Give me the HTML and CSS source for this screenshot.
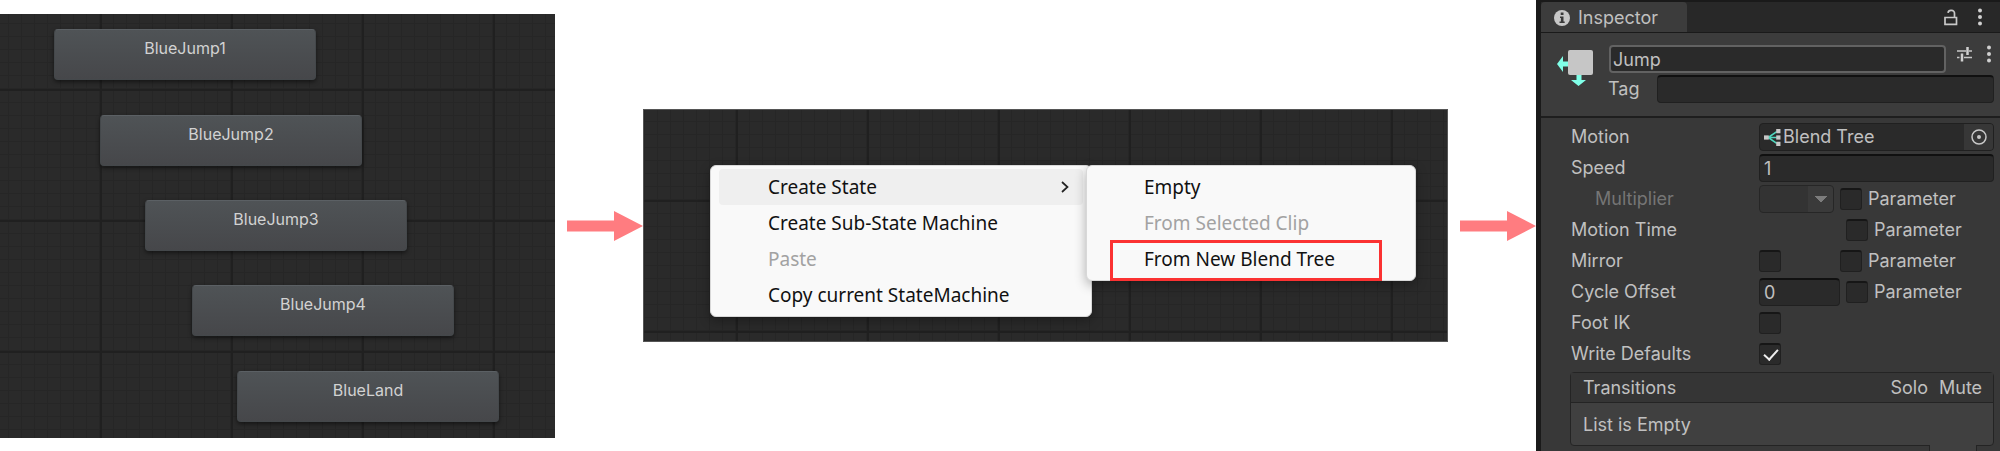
FILE: index.html
```html
<!DOCTYPE html>
<html lang="en">
<head>
<meta charset="utf-8">
<title>Blend tree setup</title>
<link rel="stylesheet" href="styles.css">
</head>
<body>
<main class="steps">
  <section class="canvas states" aria-label="States">
    <div class="node node-1">BlueJump1</div>
    <div class="node node-2">BlueJump2</div>
    <div class="node node-3">BlueJump3</div>
    <div class="node node-4">BlueJump4</div>
    <div class="node node-5">BlueLand</div>
  </section>

  <svg class="arrow" viewBox="0 0 76 30" aria-hidden="true"><path d="M0 9.500H47V0L76 15L47 30V20.500H0Z" fill="#ff7c80"/></svg>

  <section class="canvas context" aria-label="Context menu">
    <div class="menu menu-main">
      <button class="item active">Create State
        <svg class="chevron" viewBox="0 0 8 12" aria-hidden="true"><path d="M1 1L6.500 6L1 11" fill="none" stroke="#222" stroke-width="1.700"/></svg>
      </button>
      <button class="item">Create Sub-State Machine</button>
      <button class="item" disabled>Paste</button>
      <button class="item">Copy current StateMachine</button>
    </div>
    <div class="menu menu-sub">
      <button class="item">Empty</button>
      <button class="item" disabled>From Selected Clip</button>
      <button class="item marked">From New Blend Tree</button>
    </div>
  </section>

  <svg class="arrow" viewBox="0 0 76 30" aria-hidden="true"><path d="M0 9.500H47V0L76 15L47 30V20.500H0Z" fill="#ff7c80"/></svg>

  <section class="inspector" aria-label="Inspector">
    <header class="tabs">
      <button class="tab">
        <svg class="info" viewBox="0 0 16 16" aria-hidden="true"><circle cx="8" cy="8" r="8" fill="#c8c8c8"/><path d="M6.700 2.600h2.800v2.300H6.700zM6 6.400h3.500v5h1.200v1.700H5.500v-1.700h1.400V8.100H6z" fill="#3a3a3a"/></svg>
        Inspector
      </button>
      <button class="icon-button" aria-label="Unlock"><svg width="14" height="17" viewBox="0 0 14 17"><path d="M1 8.500h11.500v6.800H1zM10.500 8.500V4.500a3 3 0 0 0-3-3.200h-.5a3 3 0 0 0-3 2.500" fill="none" stroke="#c8c8c8" stroke-width="1.700"/></svg></button>
      <button class="icon-button" aria-label="Window menu"><svg width="4" height="18" viewBox="0 0 4 18"><g fill="#d0d0d0"><circle cx="2" cy="2.500" r="2"/><circle cx="2" cy="9" r="2"/><circle cx="2" cy="15.500" r="2"/></g></svg></button>
    </header>

    <div class="title">
      <svg class="state-icon" viewBox="0 0 36 36" aria-hidden="true"><path d="M0 14L6 6V11.500H12V16.500H6V22ZM19.500 24V30H14L21.500 36L29 30H24.500V24Z" fill="#80ffe8"/><rect x="11" y="0" width="25" height="25" rx="2" fill="#c6c6c6"/></svg>
      <div class="title-fields">
        <div class="title-line">
          <input class="field name" aria-label="Name" value="Jump">
          <button class="icon-button" aria-label="Presets"><svg width="16" height="16" viewBox="0 0 16 16"><path d="M0 5H9M12 5H15M0 11.500H2.500M7 11.500H15" stroke="#c8c8c8" stroke-width="1.500"/><path d="M10.500 1V9M5 7.500V15.500" stroke="#d0d0d0" stroke-width="2.500"/></svg></button>
          <button class="icon-button" aria-label="More"><svg width="4" height="18" viewBox="0 0 4 18"><g fill="#d0d0d0"><circle cx="2" cy="2.500" r="2"/><circle cx="2" cy="9" r="2"/><circle cx="2" cy="15.500" r="2"/></g></svg></button>
        </div>
        <div class="title-line">
          <label class="tag-label" for="tag">Tag</label>
          <input class="field" id="tag">
        </div>
      </div>
    </div>

    <div class="properties">
      <div class="row">
        <label for="motion">Motion</label>
        <div class="object">
          <svg class="tree" viewBox="0 0 16 16" aria-hidden="true"><path d="M4 8L12 2.500M4 8H12M4 8L12 13.500" stroke="#4fd6bd" stroke-width="1.500" fill="none"/><g fill="#c8c8c8"><rect x="0" y="6" width="4.500" height="4"/><rect x="11.500" y="0" width="4" height="4"/><rect x="11.500" y="6" width="4" height="4"/><rect x="11.500" y="12" width="4" height="4"/></g></svg>
          <input class="object-name" id="motion" value="Blend Tree" readonly>
          <button class="picker" aria-label="Select motion"><svg width="16" height="16" viewBox="0 0 16 16"><circle cx="8" cy="8" r="7" fill="none" stroke="#c8c8c8" stroke-width="1.500"/><circle cx="8" cy="8" r="2" fill="#c8c8c8"/></svg></button>
        </div>
      </div>
      <div class="row">
        <label for="speed">Speed</label>
        <input class="field" id="speed" value="1">
      </div>
      <div class="row">
        <label class="sub" for="multiplier">Multiplier</label>
        <div class="value tight">
          <select class="select" id="multiplier" disabled></select>
          <label class="check"><input type="checkbox">Parameter</label>
        </div>
      </div>
      <div class="row">
        <span>Motion Time</span>
        <div class="value">
          <span></span>
          <label class="check"><input type="checkbox">Parameter</label>
        </div>
      </div>
      <div class="row">
        <label for="mirror">Mirror</label>
        <div class="value tight">
          <input type="checkbox" id="mirror">
          <label class="check"><input type="checkbox">Parameter</label>
        </div>
      </div>
      <div class="row">
        <label for="cycle">Cycle Offset</label>
        <div class="value">
          <input class="field" id="cycle" value="0">
          <label class="check"><input type="checkbox">Parameter</label>
        </div>
      </div>
      <div class="row">
        <label for="foot">Foot IK</label>
        <input type="checkbox" id="foot">
      </div>
      <div class="row">
        <label for="defaults">Write Defaults</label>
        <input type="checkbox" id="defaults" checked>
      </div>
    </div>

    <div class="transitions">
      <div class="transitions-head"><span class="grow">Transitions</span><span>Solo</span><span class="mute">Mute</span></div>
      <div class="transitions-body">List is Empty</div>
    </div>
    <div class="list-footer"></div>
  </section>
</main>
</body>
</html>
```
FILE: styles.css
```css
* { box-sizing: border-box; }

body {
  margin: 0;
  background: #fff;
  font-family: Inter, "Liberation Sans", sans-serif;
}

button, input, select {
  margin: 0;
  padding: 0;
  border: 0;
  background: none;
  color: inherit;
  font: inherit;
}

.steps {
  display: grid;
  grid-template-columns: 555fr 88px 805fr 88px 464fr;
  align-items: center;
  min-height: 100vh;
}

.canvas {
  position: relative;
  background-color: #2a2a2a;
  background-image:
    linear-gradient(90deg, #202020 2px, transparent 2px),
    linear-gradient(#202020 2px, transparent 2px),
    repeating-linear-gradient(90deg, #262626 0 1px, transparent 1px 13px),
    repeating-linear-gradient(#262626 0 1px, transparent 1px 13px);
  background-size: 131px 131px;
}

.states {
  height: 424px;
  background-position: 100px 75px;
}

.node {
  position: absolute;
  width: 262px;
  height: 51px;
  padding-top: 8px;
  border: 1px solid #44484b;
  border-top-color: #5b6064;
  border-radius: 4px;
  background: linear-gradient(#4f5356, #46474a);
  box-shadow: 0 2px 4px rgba(0, 0, 0, 0.5);
  color: #d2d2d2;
  font-size: 16px;
  line-height: 20px;
  text-align: center;
}

.node-1 { left: 54px; top: 15px; }
.node-2 { left: 100px; top: 101px; }
.node-3 { left: 145px; top: 186px; }
.node-4 { left: 192px; top: 271px; }
.node-5 { left: 237px; top: 357px; }

.arrow {
  justify-self: end;
  width: 76px;
  height: 30px;
}

.context {
  height: 233px;
  border: 1px solid #555;
  background-position: 92px 90px;
}

.menu {
  position: absolute;
  top: 55px;
  padding: 3px 8px;
  border: 1px solid #d8d8d8;
  border-radius: 6px;
  background: #f9f9f9;
  box-shadow: 0 4px 12px rgba(0, 0, 0, 0.3);
  font-family: "Noto Sans", "Open Sans", sans-serif;
  font-size: 19px;
}

.menu-main {
  left: 66px;
  width: 382px;
}

.menu-sub {
  left: 442px;
  width: 330px;
}

.item {
  display: flex;
  align-items: center;
  justify-content: space-between;
  width: 100%;
  height: 36px;
  padding: 0 14px 0 49px;
  border-radius: 4px;
  color: #111;
  text-align: left;
}

.active { background: #efefef; }
.item:disabled { color: #a2a2a2; }

.marked { position: relative; }

.marked::after {
  content: "";
  position: absolute;
  inset: -1px 25px -4px 15px;
  border: 3px solid #fb3232;
}

.chevron {
  width: 8px;
  height: 12px;
}

.inspector {
  align-self: stretch;
  border-left: 5px solid #1a1a1a;
  background: #383838;
  color: #c0c0c0;
  font-size: 18px;
  line-height: 22px;
  overflow: hidden;
}

.tabs {
  display: flex;
  align-items: center;
  gap: 20px;
  height: 33px;
  padding: 0 18px 0 0;
  border-top: 2px solid #1a1a1a;
  border-bottom: 1px solid #1a1a1a;
  background: #282828;
}

.tab {
  display: flex;
  align-items: center;
  gap: 8px;
  width: 146px;
  height: 100%;
  margin-right: auto;
  padding: 2px 0 0 13px;
  border-radius: 4px 4px 0 0;
  background: #3c3c3c;
}

.info {
  width: 16px;
  height: 16px;
}

.icon-button { display: flex; }

.title {
  display: flex;
  align-items: flex-start;
  gap: 15px;
  padding: 12px 6px 13px 16px;
  border-bottom: 2px solid #1e1e1e;
  background: #3c3c3c;
}

.state-icon {
  width: 36px;
  height: 36px;
  margin-top: 5px;
}

.title-fields {
  display: grid;
  flex: 1;
  gap: 2px;
}

.title-line {
  display: flex;
  align-items: center;
}

.title-line .icon-button {
  margin: 0 3px 10px 11px;
}

.tag-label { width: 49px; }

.field {
  flex: 1;
  min-width: 0;
  width: 100%;
  height: 28px;
  padding: 0 4px;
  border: 1px solid #202020;
  border-top: 2px solid #101010;
  border-radius: 4px;
  background: #2a2a2a;
}

.name {
  margin-left: 1px;
  border: 2px solid #626262;
  padding: 0 2px;
}

.properties {
  display: grid;
  gap: 3px;
  padding: 5px 6px 4px 30px;
}

.row {
  display: grid;
  grid-template-columns: 188px 1fr;
  align-items: center;
  min-height: 28px;
}

.sub {
  padding-left: 24px;
  color: #757575;
}

.value {
  display: grid;
  grid-template-columns: 81px 1fr;
  align-items: center;
  column-gap: 6px;
}

.tight { grid-template-columns: 75px 1fr; }

.check {
  display: flex;
  align-items: center;
  gap: 6px;
}

input[type="checkbox"] {
  appearance: none;
  width: 22px;
  height: 22px;
  border: 1px solid #202020;
  border-top: 2px solid #161616;
  border-radius: 3px;
  background: #2a2a2a;
}

input[type="checkbox"]:checked::before {
  content: "";
  display: block;
  width: 6px;
  height: 12px;
  margin: 1px 0 0 7px;
  border: solid #eee;
  border-width: 0 2px 2px 0;
  transform: rotate(42deg);
}

.object {
  display: flex;
  align-items: center;
  height: 28px;
  padding-left: 4px;
  border: 1px solid #202020;
  border-radius: 4px;
  background: #2a2a2a;
  overflow: hidden;
}

.tree {
  width: 17px;
  height: 17px;
}

.object-name {
  flex: 1;
  min-width: 0;
  padding-left: 2px;
}

.picker {
  display: flex;
  align-items: center;
  justify-content: center;
  width: 29px;
  height: 100%;
  background: #373737;
}

.select {
  appearance: none;
  height: 28px;
  border: 1px solid #262626;
  border-radius: 4px;
  background-image:
    linear-gradient(to bottom left, #7c7c7c 50%, transparent 50%),
    linear-gradient(to bottom right, #7c7c7c 50%, transparent 50%),
    linear-gradient(90deg, #333 48px, #3a3a3a 48px);
  background-position: 55px 10px, 61px 10px, 0 0;
  background-size: 6px 7px, 6px 7px, 100% 100%;
  background-repeat: no-repeat;
  opacity: 1;
}

.transitions {
  margin: 0 6px 0 29px;
  border: 1px solid #242424;
  border-radius: 4px;
  background: #404040;
}

.transitions-head {
  display: flex;
  gap: 11px;
  padding: 4px 10px 3px 12px;
  border-bottom: 1px solid #242424;
  background: #353535;
}

.grow { flex: 1; }

.mute {
  width: 44px;
  overflow: hidden;
}

.transitions-body {
  padding: 11px 12px 9px;
}

.list-footer {
  width: 48px;
  height: 6px;
  margin: -1px 23px 0 auto;
  border: solid #242424;
  border-width: 0 1px;
  background: #404040;
}
```
